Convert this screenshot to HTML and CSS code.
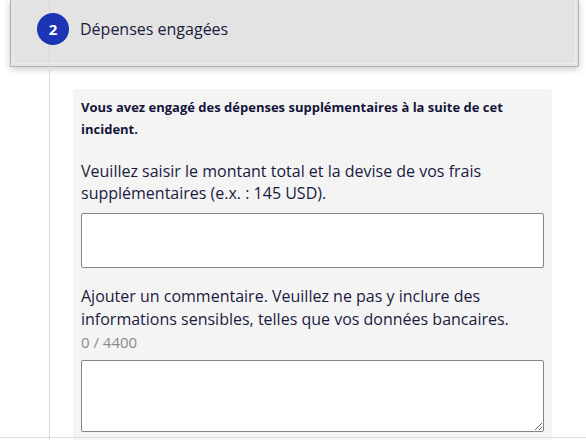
FILE: index.html
```html
<!DOCTYPE html>
<html lang="fr">
<head>
<meta charset="utf-8">
<title>Dépenses engagées</title>
<link rel="stylesheet" href="styles.css">
</head>
<body>
<div class="page">
  <div class="step-card">
    <div class="step-inner">
      <div class="step-row">
        <span class="step-num">2</span>
        <span class="step-title">Dépenses engagées</span>
      </div>
    </div>
  </div>
  <div class="panel">
    <p class="intro">Vous avez engagé des dépenses supplémentaires à la suite de cet incident.</p>
    <label class="field-label" for="amount">Veuillez saisir le montant total et la devise de vos frais supplémentaires (e.x. : 145 USD).</label>
    <input class="text-input" id="amount" type="text">
    <label class="field-label comment-label" for="comment">Ajouter un commentaire. Veuillez ne pas y inclure des informations sensibles, telles que vos données bancaires.</label>
    <div class="counter">0 / 4400</div>
    <textarea class="text-area" id="comment"></textarea>
  </div>
</div>
</body>
</html>
```
FILE: styles.css
```css
html, body {
  margin: 0;
  padding: 0;
  background: #ffffff;
}
body {
  font-family: "Open Sans", Lato, sans-serif;
  color: #15153d;
  overflow: hidden;
}
.page {
  position: relative;
  height: 440px;
}
.page::before {
  content: "";
  position: absolute;
  left: 49px;
  top: 0;
  bottom: 0;
  width: 1px;
  background: #d8d8d8;
  z-index: 2;
}
.page::after {
  content: "";
  position: absolute;
  left: 0;
  right: 0;
  top: 437px;
  height: 1px;
  background: #dcdcdc;
  z-index: 3;
}
.step-card {
  margin: 0 7px 0 10px;
  height: 67px;
  box-sizing: border-box;
  border: 1px solid #b3b3bb;
  border-top: 0;
  background: #e3e3e3;
  box-shadow: 0 2px 7px rgba(0, 0, 0, 0.22);
  position: relative;
}
.step-inner {
  margin: 0 2px 1px 2px;
  border: 1px solid #ececec;
  border-top: 0;
  height: 64px;
  box-sizing: border-box;
}
.step-row {
  display: flex;
  align-items: center;
  gap: 11px;
  padding: 13px 0 0 23px;
}
.step-num {
  position: relative;
  z-index: 4;
  width: 32px;
  height: 32px;
  border-radius: 50%;
  background: #1c35b5;
  color: #ffffff;
  font-weight: 700;
  font-size: 15px;
  display: flex;
  align-items: center;
  justify-content: center;
}
.step-title {
  font-size: 16px;
  color: #1b1b3f;
}
.panel {
  margin: 22px 0 0 73px;
  width: 479px;
  background: #f4f4f4;
  border-radius: 4px 4px 0 0;
  padding: 7px 8px 10px 8px;
  box-sizing: border-box;
  height: 360px;
}
.intro {
  margin: 0;
  font-size: 13px;
  font-weight: 700;
  line-height: 22px;
  color: #14143a;
}
.field-label {
  display: block;
  margin-top: 20px;
  font-size: 16px;
  line-height: 22px;
  color: #1b1b3f;
}
.comment-label {
  margin-top: 17px;
  line-height: 23px;
}
.text-input {
  display: block;
  margin-top: 9px;
  width: 463px;
  height: 55px;
  box-sizing: border-box;
  border: 1px solid #85858f;
  border-radius: 2px;
  background: #ffffff;
  font: inherit;
}
.counter {
  font-size: 15px;
  line-height: 20px;
  color: #8a8a8e;
  margin-top: 1px;
}
.text-area {
  display: block;
  margin-top: 8px;
  width: 463px;
  height: 72px;
  box-sizing: border-box;
  border: 1px solid #85858f;
  border-radius: 2px;
  background: #ffffff;
  font: inherit;
}
```
